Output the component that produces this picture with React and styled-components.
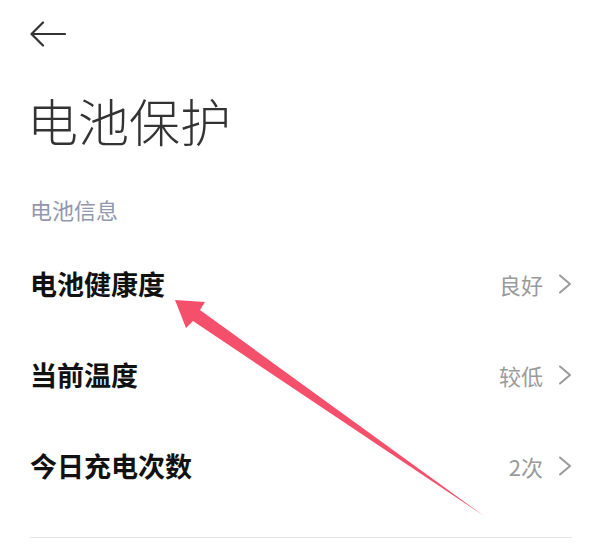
import React from "react";
import styled, { createGlobalStyle } from "styled-components";

const GlobalStyle = createGlobalStyle`
  html, body {
    margin: 0;
    padding: 0;
    background: #ffffff;
  }
  body {
    font-family: "Noto Sans CJK SC", "Noto Sans", sans-serif;
  }
`;

const Page = styled.div`
  position: relative;
  width: 600px;
  height: 555px;
  padding: 0 28px 0 30px;
  box-sizing: border-box;
  overflow: hidden;
`;

const TopBar = styled.div`
  height: 68px;
  display: flex;
  align-items: center;
`;

const BackButton = styled.button`
  border: 0;
  background: none;
  padding: 0;
  width: 36px;
  height: 26px;
  display: flex;
  align-items: center;
  cursor: pointer;
`;

const Title = styled.h1`
  margin: 27px 0 0 -3px;
  font-size: 51px;
  line-height: 51px;
  font-weight: 300;
  color: #333333;
`;

const SectionLabel = styled.div`
  margin-top: 52px;
  font-size: 22px;
  line-height: 22px;
  color: #9397ab;
`;

const List = styled.div`
  margin-top: 18px;
  display: flex;
  flex-direction: column;
`;

const Row = styled.div`
  height: 91px;
  display: flex;
  align-items: center;
  justify-content: space-between;
`;

const RowLabel = styled.span`
  font-size: 27px;
  font-weight: 700;
  color: #111111;
`;

const RowValue = styled.span`
  display: flex;
  align-items: center;
  gap: 15px;
  font-size: 22px;
  color: #9a9a9a;
`;

const Divider = styled.div`
  margin-top: 26px;
  height: 1px;
  background: #e6e6e6;
`;

const Overlay = styled.svg`
  position: absolute;
  left: 0;
  top: 0;
  pointer-events: none;
`;

const Chevron = () => (
  <svg width="14" height="20" viewBox="0 0 14 20">
    <polyline points="2,1.5 12,10 2,18.5" fill="none" stroke="#9a9a9a" strokeWidth="2" strokeLinejoin="round" strokeLinecap="round" />
  </svg>
);

const rows = [
  { label: "电池健康度", value: "良好" },
  { label: "当前温度", value: "较低" },
  { label: "今日充电次数", value: "2次" },
];

export default function App() {
  return (
    <>
      <GlobalStyle />
      <Page>
        <TopBar>
          <BackButton aria-label="返回">
            <svg width="36" height="26" viewBox="0 0 36 26">
              <path d="M1.5 13H35M13 1.5L1.5 13L13 24.5" fill="none" stroke="#333" strokeWidth="2.2" strokeLinecap="round" strokeLinejoin="round" />
            </svg>
          </BackButton>
        </TopBar>
        <Title>电池保护</Title>
        <SectionLabel>电池信息</SectionLabel>
        <List>
          {rows.map((r) => (
            <Row key={r.label}>
              <RowLabel>{r.label}</RowLabel>
              <RowValue>
                {r.value}
                <Chevron />
              </RowValue>
            </Row>
          ))}
        </List>
        <Divider />
        <Overlay width="600" height="555" viewBox="0 0 600 555">
          <polygon
            points="175,300 205,302 200,310 484,516 193,321 186,328"
            fill="#f5506b"
          />
        </Overlay>
      </Page>
    </>
  );
}
